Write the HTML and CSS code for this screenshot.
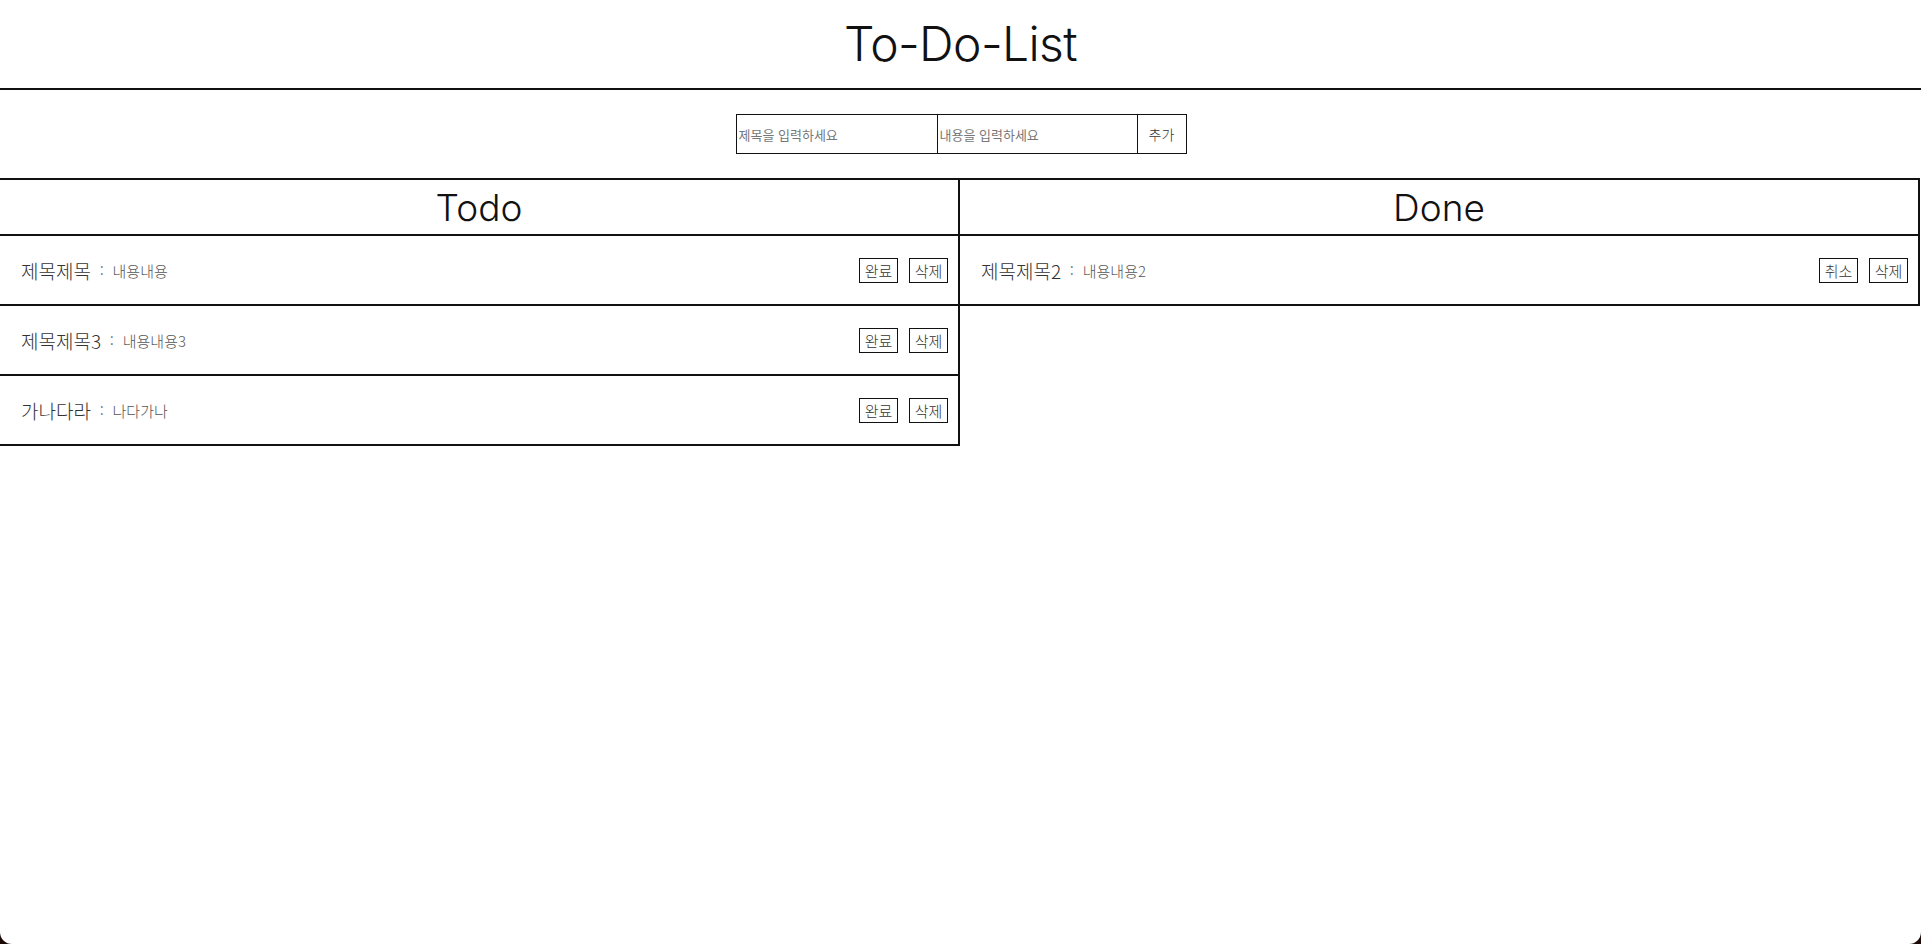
FILE: index.html
```html
<!DOCTYPE html>
<html lang="ko">
<head>
<meta charset="utf-8">
<title>To-Do-List</title>
<link rel="stylesheet" href="styles.css">
</head>
<body>
<div class="page">
  <header class="header">
    <h1 class="title">To-Do-List</h1>
  </header>
  <div class="form-area">
    <form class="add-box">
      <input class="field" type="text" placeholder="제목을 입력하세요">
      <input class="field field-second" type="text" placeholder="내용을 입력하세요">
      <button class="add-btn" type="button">추가</button>
    </form>
  </div>
  <main class="board">
    <section class="column">
      <h2 class="column-title">Todo</h2>
      <ul class="list">
        <li class="item">
          <span class="item-title">제목제목</span><span class="colon">:</span><span class="item-body">내용내용</span>
          <span class="actions"><button class="btn" type="button">완료</button><button class="btn" type="button">삭제</button></span>
        </li>
        <li class="item">
          <span class="item-title">제목제목3</span><span class="colon">:</span><span class="item-body">내용내용3</span>
          <span class="actions"><button class="btn" type="button">완료</button><button class="btn" type="button">삭제</button></span>
        </li>
        <li class="item">
          <span class="item-title">가나다라</span><span class="colon">:</span><span class="item-body">나다가나</span>
          <span class="actions"><button class="btn" type="button">완료</button><button class="btn" type="button">삭제</button></span>
        </li>
      </ul>
    </section>
    <section class="column">
      <h2 class="column-title">Done</h2>
      <ul class="list">
        <li class="item">
          <span class="item-title">제목제목2</span><span class="colon">:</span><span class="item-body">내용내용2</span>
          <span class="actions"><button class="btn" type="button">취소</button><button class="btn" type="button">삭제</button></span>
        </li>
      </ul>
    </section>
  </main>
</div>
</body>
</html>
```
FILE: styles.css
```css
html {
  background: #1c0804;
}
body {
  margin: 0;
  font-family: "Noto Sans CJK KR", "Noto Sans", sans-serif;
}
.page {
  background: #fff;
  min-height: 944px;
  border-radius: 0 0 12px 12px;
  overflow: hidden;
}
.header {
  height: 88px;
  border-bottom: 2px solid #111;
  display: flex;
  align-items: center;
  justify-content: center;
}
.title {
  margin: 0;
  font-family: Inter, "Noto Sans", sans-serif;
  font-weight: 300;
  font-size: 48px;
  line-height: 1;
  color: #111;
  letter-spacing: -0.6px;
}
.form-area {
  height: 88px;
  display: flex;
  align-items: center;
  justify-content: center;
}
.add-box {
  display: flex;
  height: 40px;
  border: 1px solid #111;
  box-sizing: border-box;
  margin-left: 1px;
}
.field {
  width: 200px;
  height: 38px;
  box-sizing: border-box;
  border: none;
  padding: 0 2px;
  margin: 0;
  outline: none;
  font-family: "Noto Sans CJK KR", sans-serif;
  font-size: 13px;
  color: #333;
}
.field::placeholder {
  color: #777;
}
.field-second {
  border-left: 1px solid #111;
}
.add-btn {
  width: 49px;
  height: 38px;
  border: none;
  border-left: 1px solid #111;
  background: #fff;
  margin: 0;
  padding: 0;
  font-family: "Noto Sans CJK KR", sans-serif;
  font-size: 14px;
  font-weight: 300;
  color: #333;
}
.board {
  width: 1920px;
  display: grid;
  grid-template-columns: 1fr 1fr;
  align-items: start;
}
.column {
  border-top: 2px solid #111;
  border-right: 2px solid #111;
}
.column-title {
  margin: 0;
  height: 56px;
  box-sizing: border-box;
  border-bottom: 2px solid #111;
  display: flex;
  align-items: center;
  justify-content: center;
  font-family: Inter, "Noto Sans", sans-serif;
  font-weight: 300;
  font-size: 37px;
  color: #111;
}
.list {
  list-style: none;
  margin: 0;
  padding: 0;
}
.item {
  height: 70px;
  box-sizing: border-box;
  border-bottom: 2px solid #111;
  display: flex;
  align-items: center;
  padding: 0 10px 0 21px;
  color: #333;
}
.item-title {
  font-size: 19px;
  font-weight: 300;
  color: #333;
}
.colon {
  font-size: 13px;
  color: #555;
  margin: 0 9px 0 9px;
}
.item-body {
  font-size: 15px;
  font-weight: 300;
  color: #555;
}
.actions {
  margin-left: auto;
  display: flex;
  gap: 11px;
}
.btn {
  height: 25px;
  width: 39px;
  box-sizing: border-box;
  border: 1px solid #111;
  background: #fff;
  padding: 0;
  font-family: "Noto Sans CJK KR", sans-serif;
  font-size: 15px;
  font-weight: 300;
  color: #333;
  line-height: 1;
}
```
